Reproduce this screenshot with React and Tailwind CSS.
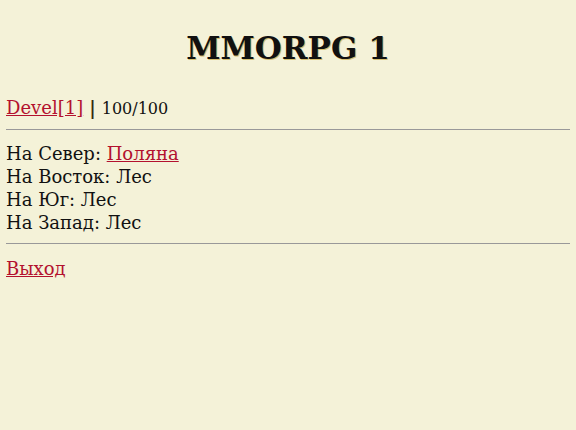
export default function App() {
  return (
    <div className="min-h-[430px] bg-[#f4f2d8] px-[6px] text-[#111] font-['DejaVu_Serif',serif] text-[18px] leading-[23px]">
      <h1 className="pt-[28px] pb-[28px] text-center text-[31px] leading-[40px] font-bold [text-shadow:1px_1px_0_#d8c070]">
        MMORPG 1
      </h1>
      <div className="flex items-baseline">
        <a href="#" className="text-[#b3112e] underline">Devel[1]</a>
        <span className="ml-[6px] font-bold text-[#3a2a10]">|</span>
        <span className="ml-[6px] text-[16px]">100/100</span>
      </div>
      <hr className="mt-[9px] mb-[12px] border-0 border-t border-[#999]" />
      <div>
        <div>
          На Север: <a href="#" className="text-[#b3112e] underline">Поляна</a>
        </div>
        <div>На Восток: Лес</div>
        <div>На Юг: Лес</div>
        <div>На Запад: Лес</div>
      </div>
      <hr className="mt-[9px] mb-[13px] border-0 border-t border-[#999]" />
      <a href="#" className="text-[#b3112e] underline">Выход</a>
    </div>
  );
}
